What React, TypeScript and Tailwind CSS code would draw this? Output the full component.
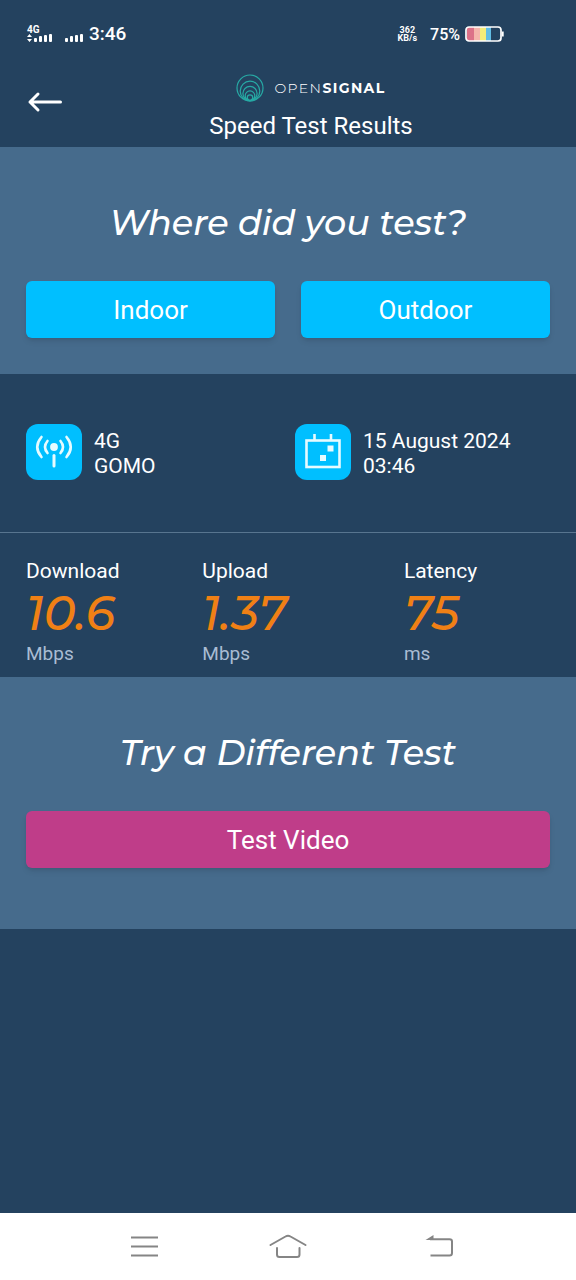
import type { ReactNode } from 'react'

const METRICS = [
  { label: 'Download', value: '10.6', unit: 'Mbps' },
  { label: 'Upload', value: '1.37', unit: 'Mbps' },
  { label: 'Latency', value: '75', unit: 'ms' },
]

function StatusBar() {
  return (
    <div className="flex h-[68px] items-center justify-between pl-[26px] pr-[72px] text-white">
      <div className="flex items-center">
        {/* SIM 1 */}
        <svg viewBox="0 0 28 20" className="h-5 w-7" fill="currentColor">
          <text x="1" y="9" fontSize="10" fontWeight="700" fontFamily="Roboto, sans-serif">4G</text>
          <path d="M3.5 10 6 13H1Z M3.5 18 1 15H6Z" />
          <rect x="8" y="14" width="3" height="4" rx="1" />
          <rect x="13" y="12" width="3" height="6" rx="1" />
          <rect x="18" y="11" width="3" height="7" rx="1" />
          <rect x="23" y="10" width="3" height="8" rx="1" />
        </svg>
        {/* SIM 2 */}
        <svg viewBox="0 0 20 20" className="ml-[11px] h-5 w-5" fill="currentColor">
          <rect x="0" y="14" width="3" height="4" rx="1" />
          <rect x="5" y="12" width="3" height="6" rx="1" />
          <rect x="10" y="11" width="3" height="7" rx="1" />
          <rect x="15" y="10" width="3" height="8" rx="1" />
        </svg>
        <span className="ml-1 text-[19px] leading-6 font-medium">3:46</span>
      </div>
      <div className="flex items-center">
        <div className="text-center text-[9px] leading-[8px] font-bold">
          <div>362</div>
          <div>KB/s</div>
        </div>
        <span className="ml-[13px] pt-0.5 text-base leading-5 font-medium">75%</span>
        <svg viewBox="0 0 40 18" className="ml-1 h-[18px] w-10" fill="none">
          <rect x="3" y="2" width="7" height="14" fill="#dc7188" />
          <rect x="10" y="2" width="6" height="14" fill="#f5b5ac" />
          <rect x="16" y="2" width="6" height="14" fill="#f5ed78" />
          <rect x="22" y="2" width="5" height="14" fill="#62bde4" />
          <rect x="2" y="2" width="35" height="14" rx="3" stroke="#fff" strokeWidth="1.7" />
          <path d="M38.7 6.5v5" stroke="#fff" strokeWidth="2" />
        </svg>
      </div>
    </div>
  )
}

function Logo() {
  return (
    <div className="flex items-center gap-2.5">
      <svg viewBox="0 0 28 28" className="size-7" fill="none" stroke="#27aaa5" strokeWidth="1.2">
        <circle cx="14" cy="14" r="13" />
        <circle cx="14" cy="17" r="9.8" />
        <circle cx="14" cy="19.5" r="7.1" />
        <circle cx="14" cy="21.7" r="4.8" />
        <circle cx="14" cy="23.6" r="2.7" />
      </svg>
      <span className="font-[Montserrat,Lato,sans-serif] text-sm leading-5 tracking-widest text-white">
        <span className="font-light">OPEN</span>
        <span className="font-bold">SIGNAL</span>
      </span>
    </div>
  )
}

function Header() {
  return (
    <header className="grid h-[79px] grid-cols-[72px_1fr_26px]">
      <button type="button" aria-label="Back" className="flex items-start pl-[26px] pt-[22px] text-white">
        <svg viewBox="0 0 38 24" className="h-6 w-[38px]" fill="none" stroke="currentColor" strokeWidth="3" strokeLinecap="round" strokeLinejoin="round">
          <path d="M34.500 12H4M12 4 4 12l8 8" />
        </svg>
      </button>
      <div className="flex flex-col items-center pt-1.5">
        <Logo />
        <h1 className="mt-2 text-2xl leading-8 text-white">Speed Test Results</h1>
      </div>
    </header>
  )
}

function SectionTitle({ children }: { children: ReactNode }) {
  return (
    <h2 className="text-center font-[Montserrat,Inter,sans-serif] text-[35px] leading-[44px] font-medium text-white italic">
      {children}
    </h2>
  )
}

function ActionButton({ children, color }: { children: ReactNode; color: string }) {
  return (
    <button type="button" className={`h-[57px] w-full rounded-md text-[26px] leading-8 text-white shadow-md ${color}`}>
      {children}
    </button>
  )
}

function InfoItem({ icon, title, detail }: { icon: ReactNode; title: string; detail: string }) {
  return (
    <div className="flex items-center gap-3">
      <div className="flex size-14 shrink-0 items-center justify-center rounded-xl bg-[#00bfff]">{icon}</div>
      <div className="pt-1 text-[21px] leading-[25px] text-white">
        <div>{title}</div>
        <div>{detail}</div>
      </div>
    </div>
  )
}

function AntennaIcon() {
  return (
    <svg viewBox="0 0 56 56" className="size-14" fill="none" stroke="#e6fbff" strokeWidth="2.6" strokeLinecap="round">
      <circle cx="28" cy="23" r="3.9" fill="#e6fbff" stroke="none" />
      <path d="M28 31.500V42" strokeWidth="3" />
      <path d="M21.500 17Q16.500 23 21.500 29M34.500 17Q39.500 23 34.500 29" />
      <path d="M15.500 13Q7 23 15.500 33M40.500 13Q49 23 40.500 33" />
    </svg>
  )
}

function CalendarIcon() {
  return (
    <svg viewBox="0 0 56 56" className="size-14" fill="none" stroke="#e6fbff" strokeWidth="2.6">
      <rect x="11.500" y="16.500" width="33" height="26.500" />
      <path d="M19.500 10V16.500M36 10V16.500" />
      <path d="M32.500 21.500h6v6h-6zM25 31h6v6h-6z" fill="#e6fbff" stroke="none" />
    </svg>
  )
}

function NavBar() {
  return (
    <nav className="grid h-[67px] grid-cols-[1fr_144px_144px_144px_1fr] items-center bg-white text-[#858585]">
      <button type="button" aria-label="Recent apps" className="col-start-2 flex justify-center">
        <svg viewBox="0 0 38 30" className="h-[30px] w-[38px]" fill="none" stroke="currentColor" strokeWidth="2">
          <path d="M6 5.500H33M6 14.500H33M6 23.500H33" />
        </svg>
      </button>
      <button type="button" aria-label="Home" className="flex justify-center">
        <svg viewBox="0 0 38 30" className="h-[30px] w-[38px]" fill="none" stroke="currentColor" strokeWidth="2" strokeLinecap="round">
          <path d="M1.500 13 16.500 4.500Q19 3 21.500 4.500L36.500 13" />
          <path d="M8 16v6.500Q8 25 10.500 25H28Q30.500 25 30.500 22.500V16" />
        </svg>
      </button>
      <button type="button" aria-label="Back" className="flex justify-center pl-4">
        <svg viewBox="0 0 38 30" className="h-[30px] w-[38px]" fill="none" stroke="currentColor" strokeWidth="2">
          <path d="M9 7.200H28.500Q31 7.200 31 9.500V21Q31 23.500 28.500 23.500H9.500" />
          <path d="M4.500 8 12.500 3V8Z" fill="currentColor" stroke="none" />
        </svg>
      </button>
    </nav>
  )
}

export default function App() {
  return (
    <div className="flex min-h-screen flex-col bg-[#24425f] font-[Roboto,sans-serif]">
      <StatusBar />
      <Header />

      <main className="grow">
        <section className="bg-[#466b8c] px-[26px] pt-[54px] pb-9">
          <SectionTitle>Where did you test?</SectionTitle>
          <div className="mt-9 grid grid-cols-2 gap-[26px]">
            <ActionButton color="bg-[#00bfff]">Indoor</ActionButton>
            <ActionButton color="bg-[#00bfff]">Outdoor</ActionButton>
          </div>
        </section>

        <section className="grid grid-cols-2 gap-3.5 border-b border-[#58758f] px-[26px] pt-[50px] pb-[52px]">
          <InfoItem icon={<AntennaIcon />} title="4G" detail="GOMO" />
          <InfoItem icon={<CalendarIcon />} title="15 August 2024" detail="03:46" />
        </section>

        {/* Results */}
        <section className="grid grid-cols-[35fr_40fr_29fr] px-[26px] pt-[25px] pb-[11px]">
          {METRICS.map((metric) => (
            <div key={metric.label}>
              <div className="text-[21px] leading-[26px] text-white">{metric.label}</div>
              <div className="font-[Montserrat,Inter,sans-serif] text-5xl leading-[58px] font-medium text-[#f08015] italic">
                {metric.value}
              </div>
              <div className="text-[19px] leading-6 text-[#a9bcd3]">{metric.unit}</div>
            </div>
          ))}
        </section>

        <section className="bg-[#466b8c] px-[26px] pt-[54px] pb-[61px]">
          <SectionTitle>Try a Different Test</SectionTitle>
          <div className="mt-9">
            <ActionButton color="bg-[#bf3d89]">Test Video</ActionButton>
          </div>
        </section>
      </main>

      <NavBar />
    </div>
  )
}
